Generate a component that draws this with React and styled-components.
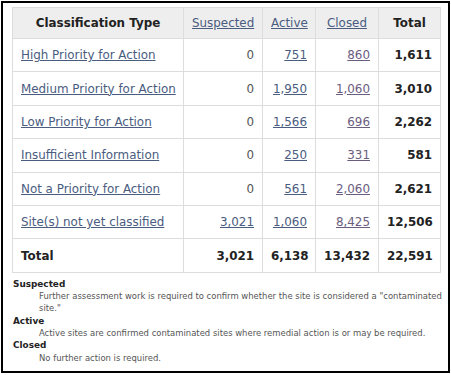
import React from "react";
import styled, { createGlobalStyle } from "styled-components";

const Global = createGlobalStyle`
  html, body { margin: 0; padding: 0; background: #fff; }
  body { font-family: "DejaVu Sans", Verdana, sans-serif; }
`;

const Frame = styled.div`
  box-sizing: border-box;
  width: 451px;
  height: 375px;
  padding: 1px;
  background: #fff;
`;

const Box = styled.div`
  box-sizing: border-box;
  width: 449px;
  height: 372px;
  border: 2px solid #000;
  padding: 4px 3px 0 9px;
  overflow: hidden;
`;

const Table = styled.table`
  border-collapse: collapse;
  table-layout: fixed;
  width: 428px;
  font-size: 11.9px;
  color: #444;
`;

const Th = styled.th`
  background: #eeeeee;
  border: 1px solid #dddddd;
  height: 30px;
  padding: 0 8px;
  font-weight: bold;
  color: #222;
  text-align: ${(p) => p.$align || "center"};
  white-space: nowrap;
`;

const Td = styled.td`
  border: 1px solid #dddddd;
  height: 32.4px;
  padding: 0 8px 0 8px;
  text-align: ${(p) => p.$align || "right"};
  font-weight: ${(p) => (p.$bold ? "bold" : "normal")};
  color: ${(p) => (p.$bold ? "#222" : "#555")};
  white-space: nowrap;
`;

const Link = styled.a`
  color: ${(p) => (p.$visited ? "#6a5d80" : "#4a5c80")};
  text-decoration: underline;
  font-weight: normal;
  cursor: pointer;
`;

const Defs = styled.dl`
  margin: 5px 0 0 1px;
  font-size: 8.45px;
  line-height: 12.3px;
  color: #555;
`;

const Term = styled.dt`
  font-weight: bold;
  font-size: 8.9px;
  color: #222;
`;

const Desc = styled.dd`
  margin: 0 0 0 26px;
`;

const rows = [
  ["High Priority for Action", "0", "751", "860", "1,611"],
  ["Medium Priority for Action", "0", "1,950", "1,060", "3,010"],
  ["Low Priority for Action", "0", "1,566", "696", "2,262"],
  ["Insufficient Information", "0", "250", "331", "581"],
  ["Not a Priority for Action", "0", "561", "2,060", "2,621"],
  ["Site(s) not yet classified", "3,021", "1,060", "8,425", "12,506"],
];

const Num = ({ v, visited }) =>
  v === "0" ? v : <Link $visited={visited}>{v}</Link>;

export default function App() {
  return (
    <>
      <Global />
      <Frame>
        <Box>
          <Table>
            <colgroup>
              <col style={{ width: 171 }} />
              <col style={{ width: 79 }} />
              <col style={{ width: 53 }} />
              <col style={{ width: 63 }} />
              <col style={{ width: 62 }} />
            </colgroup>
            <thead>
              <tr>
                <Th>Classification Type</Th>
                <Th><Link>Suspected</Link></Th>
                <Th><Link>Active</Link></Th>
                <Th><Link>Closed</Link></Th>
                <Th>Total</Th>
              </tr>
            </thead>
            <tbody>
              {rows.map((r) => (
                <tr key={r[0]}>
                  <Td $align="left"><Link>{r[0]}</Link></Td>
                  <Td><Num v={r[1]} /></Td>
                  <Td><Num v={r[2]} /></Td>
                  <Td><Num v={r[3]} visited /></Td>
                  <Td $bold>{r[4]}</Td>
                </tr>
              ))}
              <tr>
                <Td $align="left" $bold>Total</Td>
                <Td $bold>3,021</Td>
                <Td $bold>6,138</Td>
                <Td $bold>13,432</Td>
                <Td $bold>22,591</Td>
              </tr>
            </tbody>
          </Table>
          <Defs>
            <Term>Suspected</Term>
            <Desc>Further assessment work is required to confirm whether the site is considered a "contaminated site."</Desc>
            <Term>Active</Term>
            <Desc>Active sites are confirmed contaminated sites where remedial action is or may be required.</Desc>
            <Term>Closed</Term>
            <Desc>No further action is required.</Desc>
          </Defs>
        </Box>
      </Frame>
    </>
  );
}
